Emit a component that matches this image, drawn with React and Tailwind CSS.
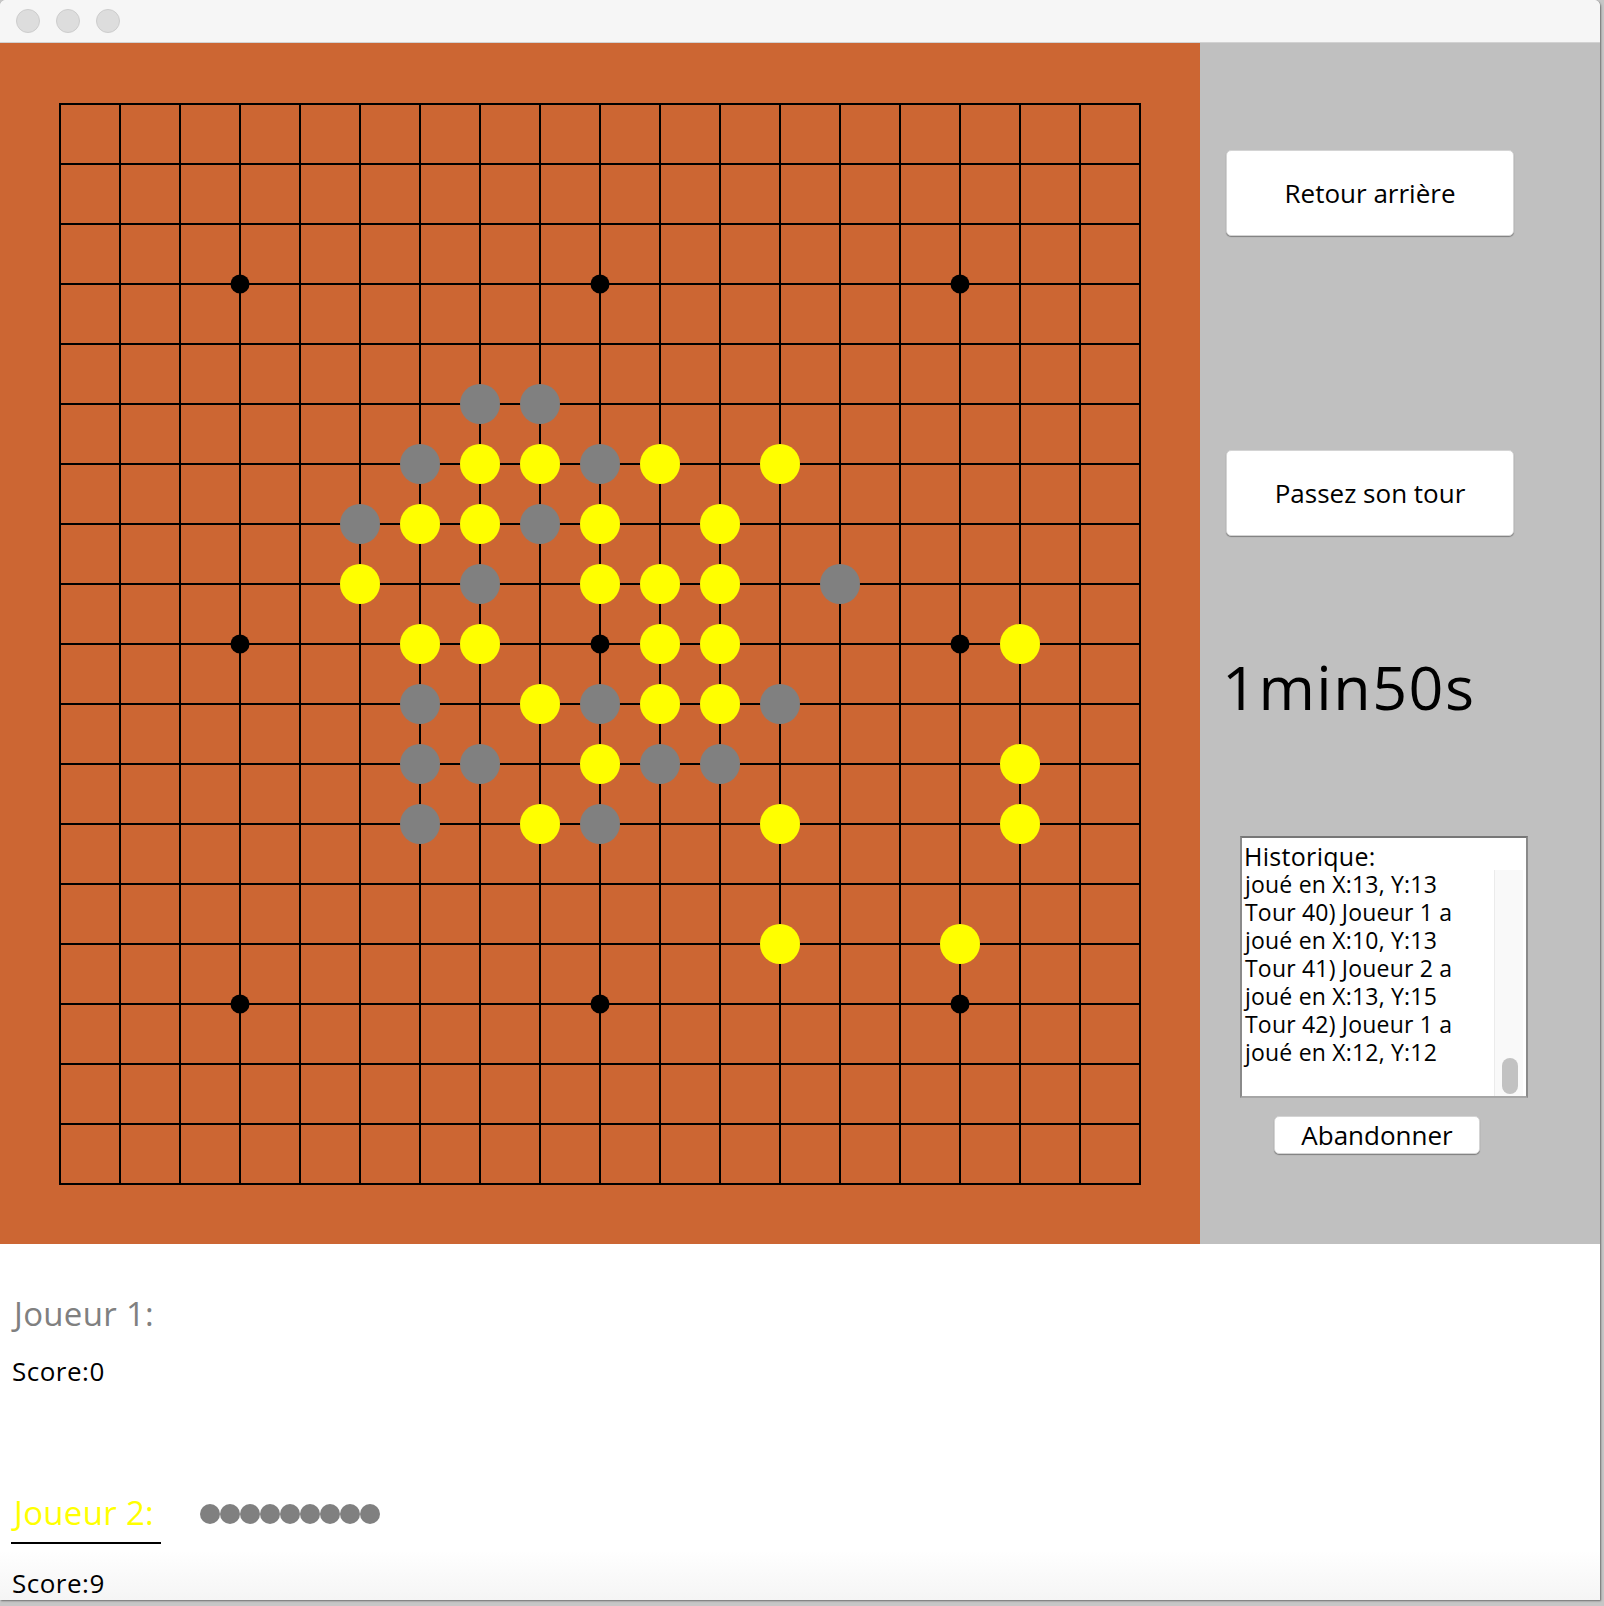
import React from 'react';

// board coordinates: 19x19 lines, 60px spacing
const GRAY = [[7,5],[8,5],[6,6],[9,6],[5,7],[8,7],[7,8],[13,8],[6,10],[9,10],[12,10],[6,11],[7,11],[10,11],[11,11],[6,12],[9,12]];
const YELLOW = [[7,6],[8,6],[10,6],[12,6],[6,7],[7,7],[9,7],[11,7],[5,8],[9,8],[10,8],[11,8],[6,9],[7,9],[10,9],[11,9],[16,9],[8,10],[10,10],[11,10],[9,11],[16,11],[8,12],[12,12],[16,12],[12,14],[15,14]];
const STARS = [3, 9, 15].flatMap(r => [3, 9, 15].map(c => [c, r]));

const HISTORY = [
  'joué en X:13, Y:13',
  'Tour 40) Joueur 1 a',
  'joué en X:10, Y:13',
  'Tour 41) Joueur 2 a',
  'joué en X:13, Y:15',
  'Tour 42) Joueur 1 a',
  'joué en X:12, Y:12',
];

const X0 = 60;
const Y0 = 61;
const STEP = 60;
const px = i => X0 + i * STEP;
const py = j => Y0 + j * STEP;

function Board() {
  const lines = Array.from({ length: 19 }, (_, i) => i);
  return (
    <div className="w-[1200px] h-[1201px] bg-[#cc6633] shrink-0">
      <svg width="1200" height="1201" viewBox="0 0 1200 1201" className="block">
        <g stroke="#000" strokeWidth="2" shapeRendering="crispEdges">
          {lines.map(i => (
            <line key={'v' + i} x1={px(i)} y1={py(0) - 1} x2={px(i)} y2={py(18) + 1} />
          ))}
          {lines.map(j => (
            <line key={'h' + j} x1={px(0) - 1} y1={py(j)} x2={px(18) + 1} y2={py(j)} />
          ))}
        </g>
        {STARS.map(([c, r]) => (
          <circle key={'s' + c + r} cx={px(c)} cy={py(r)} r="9.5" fill="#000" />
        ))}
        {GRAY.map(([c, r]) => (
          <circle key={'g' + c + '-' + r} cx={px(c)} cy={py(r)} r="20" fill="#808080" />
        ))}
        {YELLOW.map(([c, r]) => (
          <circle key={'y' + c + '-' + r} cx={px(c)} cy={py(r)} r="20" fill="#ffff00" />
        ))}
      </svg>
    </div>
  );
}

function MacButton({ children, className }) {
  return (
    <button
      className={`flex items-center justify-center bg-white rounded-[5px] border border-[#d4d4d4] shadow-[0_1px_1px_rgba(0,0,0,0.35)] text-black ${className}`}
    >
      {children}
    </button>
  );
}

function SidePanel() {
  return (
    <div className="flex-1 bg-[#c0c0c0] flex flex-col pt-[107px]">
      <MacButton className="ml-[26px] w-[288px] h-[86px] text-[26px]">Retour arrière</MacButton>
      <MacButton className="ml-[26px] mt-[214px] w-[288px] h-[86px] text-[26px]">Passez son tour</MacButton>

      <div className="ml-[22px] mt-[120px] text-[61px] leading-[61px] tracking-[1.5px] text-black">1min50s</div>

      {/* historique */}
      <div className="ml-[40px] mt-[119px] w-[288px] h-[262px] bg-white border-2 border-[#8a8a8a] border-t-[#777777] border-b-[#a6a6a6] flex flex-col">
        <div className="pl-[2px] pt-[4px] text-[25px] leading-[28px] tracking-[0.3px] text-black">Historique:</div>
        <div className="flex-1 flex min-h-0">
          <div className="flex-1 pl-[3px]">
            {HISTORY.map((l, i) => (
              <div key={i} className="text-[23px] leading-[28px] tracking-[0.2px] text-black whitespace-nowrap">{l}</div>
            ))}
          </div>
          <div className="w-[29px] mr-[3px] bg-[#f9f9f9] border-l border-[#ebebeb] flex flex-col justify-end pl-[7px] pb-[2px]">
            <div className="w-[16px] h-[36px] rounded-full bg-[#c2c2c2]" />
          </div>
        </div>
      </div>

      <MacButton className="ml-[74px] mt-[18px] w-[206px] h-[38px] text-[26px] leading-none">Abandonner</MacButton>
    </div>
  );
}

function Players() {
  const dots = Array.from({ length: 9 }, (_, i) => i);
  return (
    <div className="flex-1 bg-linear-to-b from-white from-[86%] to-[#f5f5f5] flex flex-col pt-[50px]">
      <div className="pl-[14px] text-[33px] leading-[40px] tracking-[0.3px] text-[#808080]">Joueur 1:</div>
      <div className="pl-[12px] mt-[21px] text-[26px] leading-[32px] tracking-[0.5px] text-black">Score:0</div>

      <div className="mt-[106px] flex items-start">
        <div className="ml-[11px] w-[150px] pl-[3px] pb-[9px] border-b-2 border-black text-[33px] leading-[40px] tracking-[0.3px] text-[#ffff00]">
          Joueur 2:
        </div>
        <div className="ml-[39px] mt-[11px] flex">
          {dots.map(i => (
            <div key={i} className="w-[20px] h-[20px] rounded-full bg-[#808080]" />
          ))}
        </div>
      </div>
      <div className="pl-[12px] mt-[23px] text-[26px] leading-[32px] tracking-[0.5px] text-black">Score:9</div>
    </div>
  );
}

export default function App() {
  return (
    <div className="w-[1604px] h-[1606px] bg-[#c6c6c6] font-['Open_Sans',sans-serif]">
      <div className="w-[1600px] h-[1600px] flex flex-col bg-white rounded-t-[6px] overflow-hidden shadow-[1px_1px_2px_rgba(0,0,0,0.45)]">
        {/* title bar */}
        <div className="h-[43px] shrink-0 bg-[#f6f6f6] border-b border-[#d2d2d2] flex items-center gap-[16px] pl-[16px] pb-[1px]">
          <div className="w-[24px] h-[24px] rounded-full bg-[#dddddd] border border-[#cdcdcd]" />
          <div className="w-[24px] h-[24px] rounded-full bg-[#dddddd] border border-[#cdcdcd]" />
          <div className="w-[24px] h-[24px] rounded-full bg-[#dddddd] border border-[#cdcdcd]" />
        </div>
        <div className="h-[1201px] shrink-0 flex">
          <Board />
          <SidePanel />
        </div>
        <Players />
      </div>
    </div>
  );
}
